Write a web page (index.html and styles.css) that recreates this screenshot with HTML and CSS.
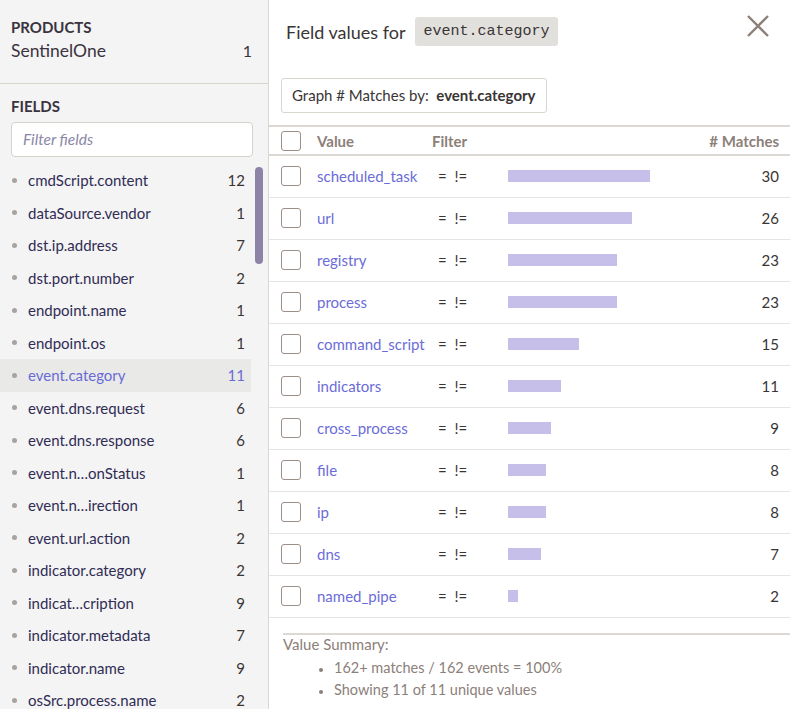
FILE: index.html
```html
<!DOCTYPE html>
<html>
<head>
<meta charset="utf-8">
<link rel="stylesheet" href="styles.css">
</head>
<body>
<div class="app">
  <aside class="sidebar">
    <section class="products">
      <h3 class="sec-title">PRODUCTS</h3>
      <div class="product-row"><span>SentinelOne</span><span>1</span></div>
    </section>
    <section class="fields">
      <h3 class="sec-title">FIELDS</h3>
      <div class="filter-input">Filter fields</div>
      <div class="field-list-wrap">
        <ul class="field-list">
          <li class="field"><span class="dot"></span><span class="fname">cmdScript.content</span><span class="fcount">12</span></li>
          <li class="field"><span class="dot"></span><span class="fname">dataSource.vendor</span><span class="fcount">1</span></li>
          <li class="field"><span class="dot"></span><span class="fname">dst.ip.address</span><span class="fcount">7</span></li>
          <li class="field"><span class="dot"></span><span class="fname">dst.port.number</span><span class="fcount">2</span></li>
          <li class="field"><span class="dot"></span><span class="fname">endpoint.name</span><span class="fcount">1</span></li>
          <li class="field"><span class="dot"></span><span class="fname">endpoint.os</span><span class="fcount">1</span></li>
          <li class="field selected"><span class="dot"></span><span class="fname">event.category</span><span class="fcount">11</span></li>
          <li class="field"><span class="dot"></span><span class="fname">event.dns.request</span><span class="fcount">6</span></li>
          <li class="field"><span class="dot"></span><span class="fname">event.dns.response</span><span class="fcount">6</span></li>
          <li class="field"><span class="dot"></span><span class="fname">event.n…onStatus</span><span class="fcount">1</span></li>
          <li class="field"><span class="dot"></span><span class="fname">event.n…irection</span><span class="fcount">1</span></li>
          <li class="field"><span class="dot"></span><span class="fname">event.url.action</span><span class="fcount">2</span></li>
          <li class="field"><span class="dot"></span><span class="fname">indicator.category</span><span class="fcount">2</span></li>
          <li class="field"><span class="dot"></span><span class="fname">indicat…cription</span><span class="fcount">9</span></li>
          <li class="field"><span class="dot"></span><span class="fname">indicator.metadata</span><span class="fcount">7</span></li>
          <li class="field"><span class="dot"></span><span class="fname">indicator.name</span><span class="fcount">9</span></li>
          <li class="field"><span class="dot"></span><span class="fname">osSrc.process.name</span><span class="fcount">2</span></li>
        </ul>
        <div class="scrollbar"></div>
      </div>
    </section>
  </aside>
  <main class="panel">
    <header class="panel-head">
      <h2 class="panel-title">Field values for <code class="badge">event.category</code></h2>
      <svg class="close" width="24" height="24" viewBox="0 0 24 24"><path d="M2 2 L22 22 M22 2 L2 22" stroke="#8c8079" stroke-width="2.4" fill="none"/></svg>
    </header>
    <div class="graph-btn">Graph # Matches by:&nbsp; <b>event.category</b></div>
    <table class="values">
      <thead>
        <tr><th class="c-check"><span class="cb"></span></th><th class="c-val">Value</th><th class="c-filter">Filter</th><th class="c-bar"></th><th class="c-num"># Matches</th></tr>
      </thead>
      <tbody>
        <tr><td class="c-check"><span class="cb"></span></td><td class="c-val"><a>scheduled_task</a></td><td class="c-filter">=&nbsp; !=</td><td class="c-bar"><span class="bar" style="width:142px"></span></td><td class="c-num">30</td></tr>
        <tr><td class="c-check"><span class="cb"></span></td><td class="c-val"><a>url</a></td><td class="c-filter">=&nbsp; !=</td><td class="c-bar"><span class="bar" style="width:124px"></span></td><td class="c-num">26</td></tr>
        <tr><td class="c-check"><span class="cb"></span></td><td class="c-val"><a>registry</a></td><td class="c-filter">=&nbsp; !=</td><td class="c-bar"><span class="bar" style="width:109px"></span></td><td class="c-num">23</td></tr>
        <tr><td class="c-check"><span class="cb"></span></td><td class="c-val"><a>process</a></td><td class="c-filter">=&nbsp; !=</td><td class="c-bar"><span class="bar" style="width:109px"></span></td><td class="c-num">23</td></tr>
        <tr><td class="c-check"><span class="cb"></span></td><td class="c-val"><a>command_script</a></td><td class="c-filter">=&nbsp; !=</td><td class="c-bar"><span class="bar" style="width:71px"></span></td><td class="c-num">15</td></tr>
        <tr><td class="c-check"><span class="cb"></span></td><td class="c-val"><a>indicators</a></td><td class="c-filter">=&nbsp; !=</td><td class="c-bar"><span class="bar" style="width:53px"></span></td><td class="c-num">11</td></tr>
        <tr><td class="c-check"><span class="cb"></span></td><td class="c-val"><a>cross_process</a></td><td class="c-filter">=&nbsp; !=</td><td class="c-bar"><span class="bar" style="width:43px"></span></td><td class="c-num">9</td></tr>
        <tr><td class="c-check"><span class="cb"></span></td><td class="c-val"><a>file</a></td><td class="c-filter">=&nbsp; !=</td><td class="c-bar"><span class="bar" style="width:38px"></span></td><td class="c-num">8</td></tr>
        <tr><td class="c-check"><span class="cb"></span></td><td class="c-val"><a>ip</a></td><td class="c-filter">=&nbsp; !=</td><td class="c-bar"><span class="bar" style="width:38px"></span></td><td class="c-num">8</td></tr>
        <tr><td class="c-check"><span class="cb"></span></td><td class="c-val"><a>dns</a></td><td class="c-filter">=&nbsp; !=</td><td class="c-bar"><span class="bar" style="width:33px"></span></td><td class="c-num">7</td></tr>
        <tr><td class="c-check"><span class="cb"></span></td><td class="c-val"><a>named_pipe</a></td><td class="c-filter">=&nbsp; !=</td><td class="c-bar"><span class="bar" style="width:10px"></span></td><td class="c-num">2</td></tr>
      </tbody>
    </table>
    <div class="summary">
      <div class="summary-title">Value Summary:</div>
      <ul class="summary-list">
        <li>162+ matches / 162 events = 100%</li>
        <li>Showing 11 of 11 unique values</li>
      </ul>
    </div>
  </main>
</div>
</body>
</html>
```
FILE: styles.css
```css
* { box-sizing: border-box; }
html, body { margin: 0; padding: 0; height: 100%; }
body {
  font-family: Lato, "Open Sans", sans-serif;
  color: #3a3535;
  background: #fff;
  overflow: hidden;
}
.app { display: flex; height: 709px; }

.sidebar {
  width: 269px;
  flex: none;
  background: #f4f4f4;
  border-right: 1px solid #d9d5cf;
  overflow: hidden;
}
.sec-title {
  margin: 0;
  font-size: 15px;
  font-weight: 700;
  color: #3a3340;
  line-height: 18px;
}
.products {
  padding: 18px 16px 0 11px;
  height: 84px;
  border-bottom: 1px solid #d9d5cf;
}
.product-row {
  display: flex;
  justify-content: space-between;
  font-size: 17.5px;
  line-height: 20px;
  margin-top: 5px;
  color: #3a3340;
}
.product-row span:last-child { font-size: 16px; }
.fields { padding: 13px 0 0 0; }
.fields .sec-title { padding-left: 11px; }
.filter-input {
  margin: 7px 15px 0 11px;
  height: 35px;
  border: 1px solid #d6d2cc;
  border-radius: 4px;
  background: #fff;
  font-size: 15.5px;
  font-style: italic;
  color: #8b87a8;
  padding: 0 11px;
  line-height: 33px;
}
.field-list-wrap { position: relative; margin-top: 7px; }
.field-list {
  list-style: none;
  margin: 0;
  padding: 0;
  width: 251px;
}
.field {
  display: flex;
  align-items: center;
  height: 32.5px;
  padding: 0 6px 0 12px;
  font-size: 15px;
  color: #302c55;
}
.field .dot {
  width: 5px; height: 5px;
  border-radius: 50%;
  background: #a9a3a0;
  margin-right: 11px;
  flex: none;
}
.field .fname { flex: 1; white-space: nowrap; }
.field .fcount { color: #3a3535; }
.field.selected { background: #e9eae8; }
.field.selected .fname, .field.selected .fcount { color: #6a6ad6; }
.scrollbar {
  position: absolute;
  left: 255px;
  top: 3px;
  width: 8px;
  height: 97px;
  border-radius: 4px;
  background: #8c83a6;
}

.panel { flex: 1; min-width: 0; }
.panel-head {
  display: flex;
  justify-content: space-between;
  align-items: flex-start;
  padding: 17px 20px 0 17px;
  height: 64px;
}
.panel-title {
  margin: 0;
  font-size: 18px;
  font-weight: 400;
  color: #3a3535;
  display: flex;
  align-items: center;
  gap: 10px;
  height: 29px;
}
.badge {
  font-family: "Liberation Mono", monospace;
  font-size: 15px;
  background: #e2e0dc;
  border-radius: 3px;
  padding: 0 8px;
  line-height: 29px;
  height: 29px;
  color: #3a3535;
}
.close { margin-top: -3px; }
.graph-btn {
  display: inline-block;
  margin: 14px 0 0 12px;
  height: 35px;
  line-height: 33px;
  border: 1px solid #d9d5cf;
  border-radius: 3px;
  padding: 0 10px;
  font-size: 15px;
  color: #3a3535;
}
.graph-btn b { font-weight: 700; }

.values {
  width: 100%;
  border-collapse: collapse;
  margin-top: 12px;
  font-size: 15px;
}
.values thead tr { border-top: 2px solid #dcd8d3; border-bottom: 2px solid #dcd8d3; height: 29px; }
.values tbody tr { border-bottom: 1px solid #e6e4e1; height: 42px; }
.values th {
  font-weight: 700;
  color: #8c8079;
  text-align: left;
  padding: 0;
}
.values td { padding: 0; }
.c-check { width: 47px; padding-left: 12px !important; }
.cb {
  display: block;
  width: 20px; height: 20px;
  border: 1.5px solid #9b8f87;
  border-radius: 3px;
  background: #fff;
}
.c-val { width: 116px; padding-left: 1px !important; }
.c-val a { color: #6c6cd8; }
.c-filter { width: 76px; }
td.c-filter { padding-left: 6px !important; color: #3a3535; }
.bar { display: block; height: 12px; background: #c5bfe9; }
.c-num { text-align: right !important; padding-right: 11px !important; width: 90px; }

.summary {
  margin: 15px 0 0 14px;
  border-top: 2px solid #dcd8d3;
  color: #8c8079;
  font-size: 15px;
}
.summary-title { line-height: 20px; margin-top: -1px; }
.summary-list {
  margin: 3px 0 0 0;
  padding-left: 50px;
  line-height: 22px;
  font-size: 14.5px;
}
.summary-list li { padding-left: 1px; }
.summary-list li::marker { color: #8c8079; font-size: 11px; }
```
